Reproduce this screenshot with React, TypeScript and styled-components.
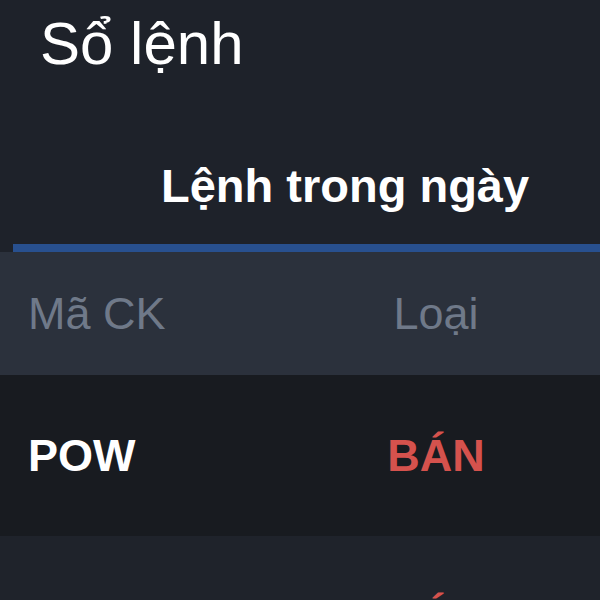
import styled, { createGlobalStyle } from "styled-components";

const GlobalStyle = createGlobalStyle`
  body {
    margin: 0;
    background: #1e222a;
    font-family: "Liberation Sans", Arial, sans-serif;
  }
`;

const Screen = styled.div`
  width: 600px;
  height: 600px;
  overflow: hidden;
  background: #1e222a;
`;

const Title = styled.h1`
  margin: 0;
  padding: 14px 0 0 40px;
  font-size: 60px;
  line-height: 60px;
  font-weight: 400;
  color: #ffffff;
`;

const TabBar = styled.div`
  display: flex;
  margin-left: 13px;
`;

const Tab = styled.div<{ $active?: boolean }>`
  flex: 1;
  padding: 88px 0 35px 148px;
  font-size: 47px;
  line-height: 47px;
  font-weight: 700;
  color: #ffffff;
  border-bottom: 8px solid ${(p) => (p.$active ? "#28508f" : "transparent")};
`;

const Row = styled.div<{ $bg: string; $h: number }>`
  display: grid;
  grid-template-columns: 332px 152px;
  align-items: center;
  padding-left: 28px;
  height: ${(p) => p.$h}px;
  background: ${(p) => p.$bg};
  font-size: 45px;
  line-height: 45px;
`;

const HeadCell = styled.div<{ $center?: boolean }>`
  color: #6f7989;
  text-align: ${(p) => (p.$center ? "center" : "left")};
  white-space: nowrap;
`;

const Cell = styled.div<{ $tone?: "sell" | "buy"; $center?: boolean }>`
  font-weight: 700;
  white-space: nowrap;
  text-align: ${(p) => (p.$center ? "center" : "left")};
  color: ${(p) =>
    p.$tone === "sell" ? "#d5524d" : p.$tone === "buy" ? "#3fb27f" : "#ffffff"};
`;

const orders = [
  { code: "POW", side: "BÁN", bg: "#181b20" },
  { code: "POW", side: "BÁN", bg: "#1f232b" },
];

const App = () => {
  return (
    <Screen>
      <GlobalStyle />
      <Title>Sổ lệnh</Title>
      <TabBar>
        <Tab $active>Lệnh trong ngày</Tab>
      </TabBar>
      <Row $bg="#2b313c" $h={123}>
        <HeadCell>Mã CK</HeadCell>
        <HeadCell $center>Loại</HeadCell>
      </Row>
      {orders.map((o, i) => (
        <Row key={i} $bg={o.bg} $h={161}>
          <Cell>{o.code}</Cell>
          <Cell $center $tone={o.side === "BÁN" ? "sell" : "buy"}>
            {o.side}
          </Cell>
        </Row>
      ))}
    </Screen>
  );
};

export default App;
